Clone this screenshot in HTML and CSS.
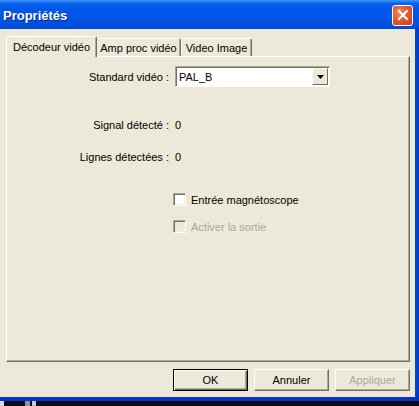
FILE: index.html
```html
<!DOCTYPE html>
<html lang="fr">
<head>
<meta charset="utf-8">
<title>Propriétés</title>
<link rel="stylesheet" href="styles.css">
</head>
<body>
<div class="window">
  <div class="titlebar">
    <span class="title">Propriétés</span>
    <div class="close">
      <svg width="12" height="12" viewBox="0 0 12 12"><path d="M2 2 L10 10 M10 2 L2 10" stroke="#fff" stroke-width="2.2" stroke-linecap="square"/></svg>
    </div>
  </div>
  <div class="main">
    <div class="client">
      <div class="tabs">
        <div class="tab tab-active t1">Décodeur vidéo</div>
        <div class="tab t2">Amp proc vidéo</div>
        <div class="tab t3">Video Image</div>
      </div>
      <div class="panel">
        <div class="row row-combo">
          <span class="label">Standard vidéo :</span>
          <div class="combo">
            <span class="combo-text">PAL_B</span>
            <span class="combo-btn"><svg width="7" height="4" viewBox="0 0 7 4"><path d="M0 0 H7 L3.5 4 Z" fill="#000"/></svg></span>
          </div>
        </div>
        <div class="row row-signal">
          <span class="label">Signal détecté :</span>
          <span class="value">0</span>
        </div>
        <div class="row row-lines">
          <span class="label">Lignes détectées :</span>
          <span class="value">0</span>
        </div>
        <div class="check check-1">
          <span class="box"></span>
          <span>Entrée magnétoscope</span>
        </div>
        <div class="check check-2 disabled">
          <span class="box"></span>
          <span>Activer la sortie</span>
        </div>
      </div>
      <div class="buttons">
        <div class="btn btn-default">OK</div>
        <div class="btn">Annuler</div>
        <div class="btn btn-disabled">Appliquer</div>
      </div>
    </div>
    <div class="rframe"></div>
  </div>
  <div class="bframe"></div>
  <div class="taskbar">
    <span class="tb-a"></span>
    <span class="tb-b"></span>
    <span class="tb-c"></span>
  </div>
</div>
</body>
</html>
```
FILE: styles.css
```css
html, body {
  margin: 0;
  padding: 0;
  background: #ECE9D8;
}
body {
  width: 419px;
  height: 406px;
  overflow: hidden;
  font-family: "Liberation Sans", Arial, sans-serif;
  font-size: 11px;
  color: #000;
}
.window {
  width: 419px;
  height: 406px;
  display: flex;
  flex-direction: column;
}
.titlebar {
  height: 29px;
  flex: none;
  display: flex;
  align-items: center;
  justify-content: space-between;
  padding: 0 6px 0 3px;
  background: linear-gradient(#3D95FF 0%, #0A62EC 12%, #0058E8 30%, #0055E5 70%, #004FDC 90%, #0046CF 100%);
}
.title {
  color: #fff;
  font-weight: bold;
  font-size: 13px;
  text-shadow: 1px 1px 0 #0A2A8A;
  margin-top: 2px;
}
.close {
  width: 19px;
  height: 19px;
  margin-top: 1px;
  border: 1px solid #fff;
  border-radius: 3px;
  background: radial-gradient(circle at 35% 35%, #F08A6A 0%, #E2582F 45%, #C8401B 100%);
  display: flex;
  align-items: center;
  justify-content: center;
}
.main {
  flex: 1;
  display: flex;
  min-height: 0;
}
.client {
  flex: 1;
  display: flex;
  flex-direction: column;
  padding: 7px 5px 0 6px;
  background: #ECE9D8;
}
.rframe {
  width: 4px;
  background: linear-gradient(90deg, #0C43D6, #0037C0);
}
.bframe {
  height: 4px;
  flex: none;
  background: #0733C8;
}
.taskbar {
  height: 5px;
  flex: none;
  background: #0E0A16;
  display: flex;
}
.tb-a { width: 4px; background: #D8D8E0; }
.tb-b { width: 5px; margin-left: 21px; background: #9090A0; }
.tb-c { width: 4px; margin-left: 2px; background: #C8C8D0; }

/* tabs */
.tabs {
  height: 20px;
  display: flex;
  align-items: flex-end;
  position: relative;
  z-index: 1;
}
.tab {
  height: 17px;
  display: flex;
  align-items: center;
  justify-content: center;
  background: #ECE9D8;
  border-top: 1px solid #fff;
  border-left: 1px solid #fff;
  border-right: 1px solid #716F64;
  box-shadow: inset -1px 0 0 #ACA899;
  border-radius: 2px 2px 0 0;
  box-sizing: content-box;
}
.t1 { width: 89px; }
.t2 { width: 83px; }
.t3 { width: 69px; }
.tab-active {
  height: 20px;
  margin-bottom: -1px;
  padding-bottom: 0;
}
.tab-active + .tab { border-left: none; }

/* panel */
.panel {
  height: 306px;
  flex: none;
  box-sizing: border-box;
  border-top: 1px solid #fff;
  border-left: 1px solid #fff;
  border-right: 1px solid #716F64;
  border-bottom: 1px solid #716F64;
  box-shadow: inset -1px -1px 0 #ACA899;
  display: flex;
  flex-direction: column;
}
.row {
  display: flex;
  align-items: center;
  gap: 6px;
}
.label {
  width: 162px;
  text-align: right;
  flex: none;
}
.row-combo { margin-top: 9px; height: 21px; }
.row-signal { margin-top: 31px; height: 13px; }
.row-lines { margin-top: 19px; height: 13px; }
.combo {
  width: 155px;
  height: 21px;
  box-sizing: border-box;
  border: 1px solid;
  border-color: #ACA899 #fff #fff #ACA899;
  box-shadow: inset 1px 1px 0 #716F64;
  background: #fff;
  display: flex;
  align-items: center;
  justify-content: space-between;
  padding: 1px 1px 1px 3px;
}
.combo-btn {
  width: 16px;
  height: 17px;
  box-sizing: border-box;
  background: #ECE9D8;
  border: 1px solid;
  border-color: #fff #716F64 #716F64 #fff;
  display: flex;
  align-items: center;
  justify-content: center;
}
.check {
  display: flex;
  align-items: center;
  gap: 5px;
  padding-left: 166px;
  height: 13px;
}
.check-1 { margin-top: 30px; }
.check-2 { margin-top: 14px; }
.box {
  width: 13px;
  height: 13px;
  box-sizing: border-box;
  border: 1px solid;
  border-color: #ACA899 #fff #fff #ACA899;
  box-shadow: inset 1px 1px 0 #716F64, inset -1px -1px 0 #F1EFE2;
  background: #fff;
}
.disabled { color: #ACA899; }
.disabled .box { background: #ECE9D8; }

/* buttons */
.buttons {
  display: flex;
  justify-content: flex-end;
  gap: 6px;
  margin-top: 7px;
}
.btn {
  width: 75px;
  height: 22px;
  box-sizing: border-box;
  border: 1px solid;
  border-color: #fff #716F64 #716F64 #fff;
  box-shadow: inset -1px -1px 0 #ACA899;
  display: flex;
  align-items: center;
  justify-content: center;
  background: #ECE9D8;
}
.btn-default {
  border: 1px solid #000;
  box-shadow: inset 1px 1px 0 #fff, inset -1px -1px 0 #716F64, inset -2px -2px 0 #ACA899;
}
.btn-disabled { color: #ACA899; }
```
